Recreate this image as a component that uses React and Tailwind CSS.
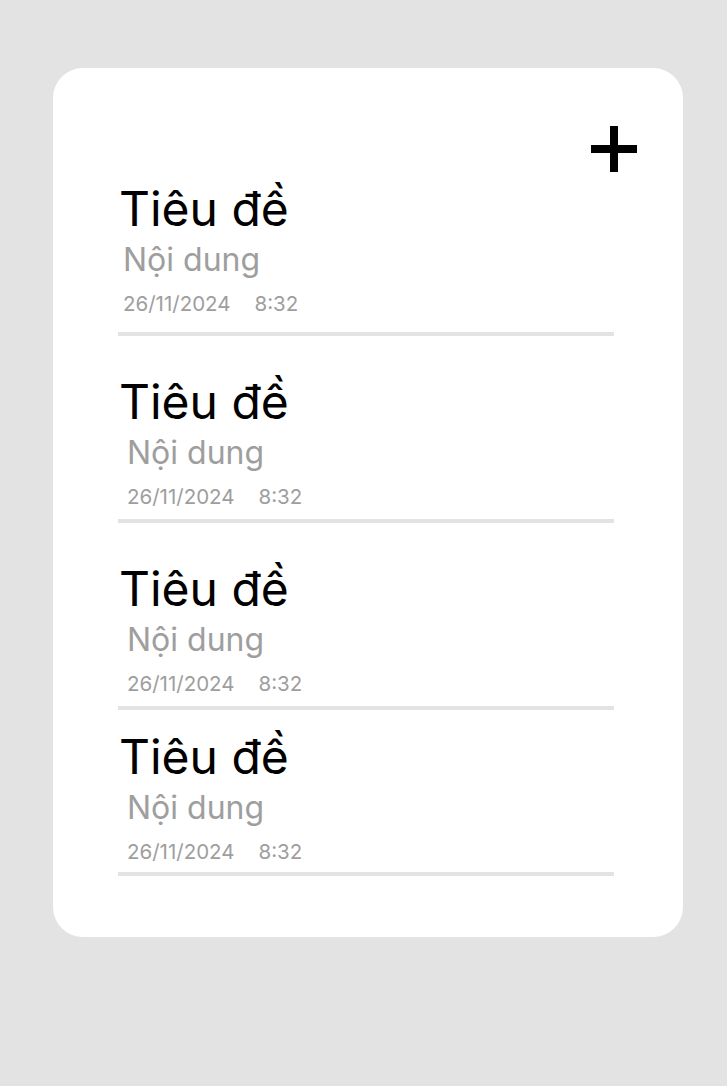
const notes = [
  { pad: 'pl-[5px]', top: 'mt-0', line: 'mt-[18px]' },
  { pad: 'pl-[9px]', top: 'mt-[42px]', line: 'mt-[12px]' },
  { pad: 'pl-[9px]', top: 'mt-[42px]', line: 'mt-[12px]' },
  { pad: 'pl-[9px]', top: 'mt-[23px]', line: 'mt-[10px]' },
];

function PlusIcon() {
  return (
    <svg width="46" height="46" viewBox="0 0 46 46">
      <rect x="19" y="0" width="8" height="46" fill="#000" />
      <rect x="0" y="19" width="46" height="8" fill="#000" />
    </svg>
  );
}

export default function App() {
  return (
    <div
      className="min-h-[1086px] w-full bg-[#e3e3e3] pt-[68px] pl-[53px]"
      style={{ fontFamily: 'Inter, "Noto Sans", sans-serif' }}
    >
      <div className="flex h-[869px] w-[630px] flex-col rounded-[30px] bg-white pt-[58px] pl-[65px] pr-[46px]">
        <div className="flex justify-end">
          <PlusIcon />
        </div>
        <div className="mt-[13px] flex flex-col">
          {notes.map((n, i) => (
            <div key={i} className={n.top}>
              <div className="pl-[1px] text-[48px] leading-[48px] text-black">Tiêu đề</div>
              <div className={`${n.pad} mt-[11px] text-[32px] leading-[32px] text-[#9e9e9e]`}>Nội dung</div>
              <div className={`${n.pad} mt-[18px] flex gap-[24px] text-[20.5px] leading-[20px] text-[#9e9e9e]`}>
                <span>26/11/2024</span>
                <span>8:32</span>
              </div>
              <div className={`${n.line} h-[4px] w-[496px] bg-[#e3e3e3]`} />
            </div>
          ))}
        </div>
      </div>
    </div>
  );
}
